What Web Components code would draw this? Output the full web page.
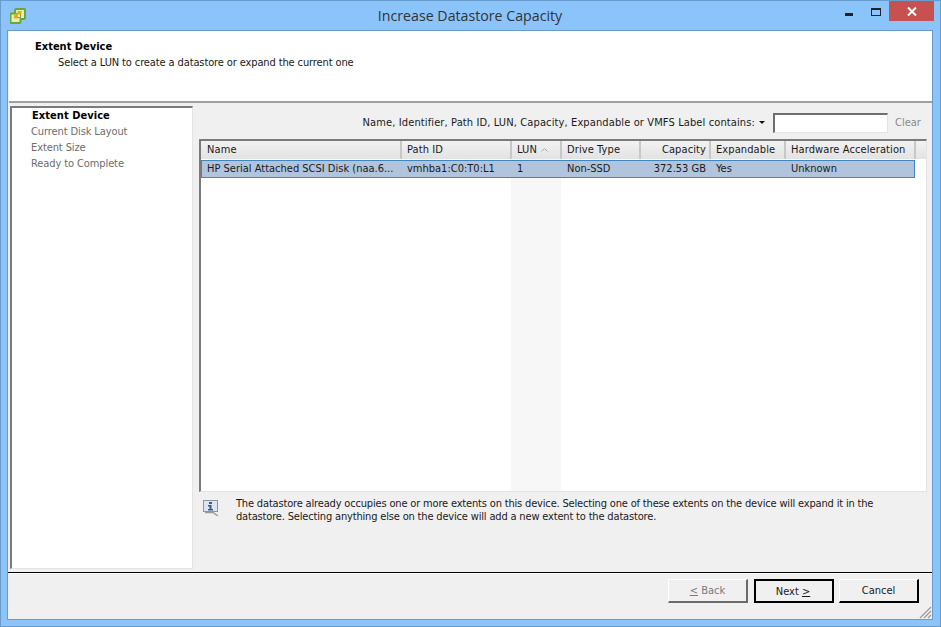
<!DOCTYPE html>
<html><head><meta charset="utf-8">
<style>
html,body{margin:0;padding:0;width:941px;height:627px;overflow:hidden;font:11px "DejaVu Sans Condensed","DejaVu Sans",sans-serif;color:#1a1a1a}
</style></head><body>
<x-window wtitle="Increase Datastore Capacity">
  <x-header heading="Extent Device" sub="Select a LUN to create a datastore or expand the current one"></x-header>
  <x-body>
    <x-steps></x-steps>
    <x-main>
      <x-filter></x-filter>
      <x-table></x-table>
      <x-info>The datastore already occupies one or more extents on this device. Selecting one of these extents on the device will expand it in the datastore. Selecting anything else on the device will add a new extent to the datastore.</x-info>
    </x-main>
  </x-body>
  <x-footer></x-footer>
</x-window>
<script>
function def(name,html){customElements.define(name,class extends HTMLElement{
  connectedCallback(){ if(this.shadowRoot)return; const r=this.attachShadow({mode:'open'});
    r.innerHTML=typeof html==='function'?html(this):html; }
});}
def('x-window',e=>`<style>
:host{display:flex;flex-direction:column;width:941px;height:627px;box-sizing:border-box;background:#8ac4fa;border:1px solid #6a9ccb}
.tb{height:29px;flex:none;display:flex;align-items:center;position:relative;padding-left:9px}
.t{position:absolute;left:0;right:0;top:6px;text-align:center;font:14.200px/18px "Open Sans",sans-serif;color:#333;padding-right:1px}
.btns{position:absolute;right:6px;top:0;display:flex;align-items:flex-start}
.min{width:8px;height:3px;background:#222;margin:12px 18px 0 0}
.max{box-sizing:border-box;width:10px;height:8px;border:1px solid #222;border-top-width:2px;margin:7px 8px 0 0}
.cl{width:45px;height:20px;background:#c75050;display:flex;align-items:center;justify-content:center}
.client{flex:1;margin:0 7px 6px 6px;background:#f0f0f0;border:1px solid #6a9ccb;display:flex;flex-direction:column;min-height:0}
</style>
<div class="tb">
<svg width="16" height="16" viewBox="0 0 16 16"><path d="M6 1h8.500l.5.500v8.500l-1 1h-3.500v3.500l-1 .5h-8.500l-.5-.5v-8.500l1-.5h3.500v-3.500z" fill="#dff0c8" stroke="#6aa82e" stroke-width="2" stroke-linejoin="round"/><path d="M6.500 5.500h4v4h-4z" fill="none" stroke="#6aa82e"/><rect x="7.500" y="3" width="4" height="3.500" fill="#f2a900"/><rect x="4" y="6.500" width="4" height="4" fill="#f2a900"/></svg>
<div class="t">${e.getAttribute('wtitle')}</div>
<div class="btns"><div class="min"></div><div class="max"></div><div class="cl"><svg width="10" height="9" viewBox="0 0 10 9"><path d="M1 .5l8 8M9 .5l-8 8" stroke="#fff" stroke-width="2"/></svg></div></div>
</div>
<div class="client"><slot></slot></div>`);
def('x-header',e=>`<style>
:host{display:block;flex:none;height:72px;box-sizing:border-box;background:#fff;border-bottom:2px solid #a0a0a0;padding:9px 0 0 26px;margin-left:1px}
.h{font-weight:bold;line-height:14px;color:#000}
.s{line-height:16px;margin:1px 0 0 23px;color:#1a1a1a;letter-spacing:-.117px}
</style><div class="h">${e.getAttribute('heading')}</div><div class="s">${e.getAttribute('sub')}</div>`);
def('x-body',`<style>:host{display:flex;flex:1;min-height:0;padding:3px 5px 3px 2px;gap:6px;border-bottom:1px solid #000}</style><slot></slot>`);
def('x-steps',`<style>
:host{display:block;width:183px;flex:none;box-sizing:border-box;background:#fff;border:1px solid #e3e3e3;border-top:2px solid #7a7a7a;border-left:2px solid #7a7a7a;padding:0 0 0 20px}
div{line-height:16px;color:#6d6d6d;margin-left:-1px;letter-spacing:-.1px}
.a{font-weight:bold;color:#000;margin-left:0;letter-spacing:.05px}
</style><div class="a">Extent Device</div><div>Current Disk Layout</div><div>Extent Size</div><div>Ready to Complete</div>`);
def('x-main',`<style>:host{display:flex;flex-direction:column;flex:1;min-width:0}</style><slot></slot>`);
def('x-filter',`<style>
:host{display:flex;align-items:center;justify-content:flex-end;height:33px;flex:none;box-sizing:border-box;padding:0 4px 0 0}
.l{letter-spacing:.12px}
.a{margin:0 8px 0 4px;width:0;height:0;border:3px solid transparent;border-top:3px solid #111;border-bottom:0}
.i{box-sizing:border-box;width:115px;height:20px;background:#fff;border:1px solid #e3e3e3;border-top:2px solid #6e6e6e;border-left:2px solid #6e6e6e;margin:0 7px 0 0}
.c{color:#8a8a8a;width:28px}
</style><span class="l">Name, Identifier, Path ID, LUN, Capacity, Expandable or VMFS Label contains:</span><span class="a"></span><span class="i"></span><span class="c">Clear</span>`);
const cols=[['Name',201],['Path ID',110],['LUN',50,'','s'],['Drive Type',79],['Capacity',70,'r'],['Expandable',75],['Hardware Acceleration',130]];
const vals=['HP Serial Attached SCSI Disk (naa.6...','vmhba1:C0:T0:L1','1','Non-SSD','372.53 GB','Yes','Unknown'];
def('x-table',`<style>
:host{display:flex;flex-direction:column;height:353px;flex:none;box-sizing:border-box;background:#fff;border:1px solid #e3e3e3;border-top:2px solid #7a7a7a;border-left:2px solid #7a7a7a;position:relative}
.head,.row{display:flex;flex:none}
.head{height:18px;background:linear-gradient(#f2f2f2,#e4e4e4 90%);margin-bottom:1px}
.hc{flex:none;box-sizing:border-box;border-right:2px solid #c8c8c8;padding:0 3px 0 5px;line-height:18px;display:flex;align-items:center;gap:4px;white-space:nowrap;overflow:hidden;letter-spacing:.1px}
.hc:first-child{padding-left:6px}
.r{justify-content:flex-end}
.row{height:18px;background:#b0c4de;box-sizing:border-box;border:1px solid #3e86bd;width:714px;position:relative;z-index:1;overflow:hidden}
.c{flex:none;box-sizing:border-box;padding:0 0 0 6px;line-height:16px;white-space:nowrap}
.c.r{text-align:right;padding-right:4px}
.c:first-child{width:199px!important;padding-left:5px}
.band{position:absolute;left:310px;width:50px;top:18px;bottom:0;background:#f7f7f7}
</style>
<div class="head">${cols.map(c=>`<div class="hc ${c[2]||''}" style="width:${c[1]}px">${c[0]}${c[3]?'<svg width="7" height="4" viewBox="0 0 7 4"><path d="M.5 3.500L3.500.5l3 3" fill="none" stroke="#aaa"/></svg>':''}</div>`).join('')}<div style="flex:1"></div></div>
<div class="band"></div>
<div class="row">${vals.map((v,i)=>`<div class="c ${cols[i][2]||''}" style="width:${cols[i][1]}px">${v}</div>`).join('')}</div>`);
def('x-info',`<style>
:host{display:flex;flex:none;padding:5px 8px 0 4px;gap:17px}
svg{flex:none;margin-top:3px}
.t{line-height:13px;color:#1a1a1a;letter-spacing:-.17px}
</style><svg width="16" height="16" viewBox="0 0 16 16"><rect x=".5" y=".5" width="14" height="11" fill="#dbe6f2" stroke="#8a95a0"/><rect x="6" y="2" width="3" height="2" fill="#3a5a80"/><path d="M5 5h3.500v4h1.500v1.500h-5v-1.500h1.500v-2.500h-1.500z" fill="#3a5a80"/><path d="M2 12.500h8l5 3.500" fill="none" stroke="#9a9a9a" stroke-width="1.500"/></svg><div class="t"><slot></slot></div>`);
def('x-footer',`<style>
:host{display:flex;flex:none;height:46px;box-sizing:border-box;justify-content:flex-end;padding:5px 13px 0 0;gap:5px;position:relative;align-items:flex-start;border-top:1px solid #fff}
.g{position:absolute;right:0;bottom:0}
x-btn:first-of-type{margin-right:1px}
</style>
<x-btn label="&lt; Back" disabled></x-btn><x-btn def label="Next &gt;"></x-btn><x-btn label="Cancel"></x-btn>
<svg class="g" width="14" height="14" viewBox="0 0 14 14"><path d="M13 2L2 13M13 6L6 13M13 10l-3 3" stroke="#9a9a9a" stroke-width="1.200"/></svg>`);
customElements.define('x-btn',class extends HTMLElement{connectedCallback(){if(this.shadowRoot)return;const r=this.attachShadow({mode:'open'});
 const d=this.hasAttribute('disabled'),n=this.hasAttribute('def');let l=this.getAttribute('label');
 l=l.replace(/[<>]/g,m=>'<u>'+(m=='<'?'&lt;':'&gt;')+'</u>');
 r.innerHTML=`<style>:host{display:block;width:80px;height:24px;box-sizing:border-box;background:#f0f0f0;text-align:center;line-height:22px;color:${d?'#7a7a7a':'#1a1a1a'};
 border:1px solid ${n?'#000':'#fff'};border-right:2px solid ${d?'#6a6a6a':'#000'};border-bottom:2px solid ${d?'#6a6a6a':'#000'};${n?'border-width:2px;padding-right:2px;':''}}</style>${l}`;}});
</script>
</body></html>
